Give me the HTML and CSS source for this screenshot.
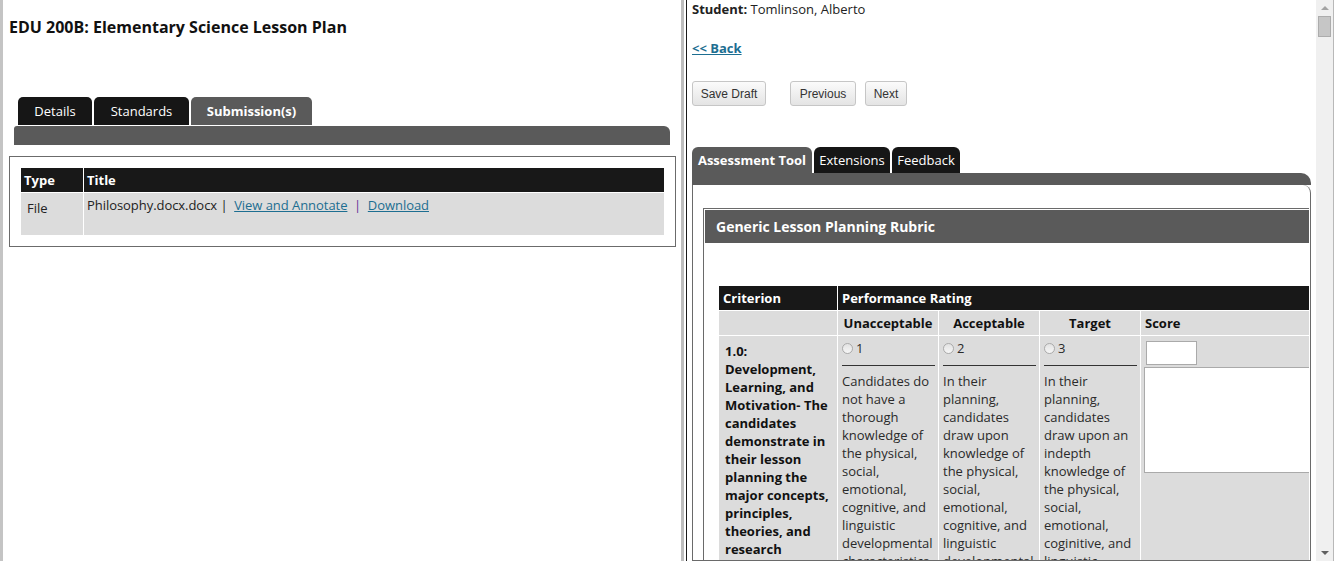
FILE: index.html
```html
<!DOCTYPE html>
<html lang="en">
<head>
    <meta charset="UTF-8">
    <meta name="viewport" content="width=device-width, initial-scale=1.0">
    <title>EDU 200B: Elementary Science Lesson Plan</title>
    <link rel="stylesheet" href="styles.css">
</head>
<body>
<div class="page">

    <!-- Assignment side -->
    <div class="left-pane">
        <h1 class="assignment-title">EDU 200B: Elementary Science Lesson Plan</h1>

        <ul class="tabs tabs-left">
            <li class="tab tab-details">Details</li>
            <li class="tab tab-standards">Standards</li>
            <li class="tab tab-submissions active">Submission(s)</li>
        </ul>
        <div class="left-bar"></div>

        <div class="submissions-box">
            <table class="submissions">
                <colgroup>
                    <col class="col-type">
                    <col>
                </colgroup>
                <tr>
                    <th>Type</th>
                    <th>Title</th>
                </tr>
                <tr>
                    <td class="type-cell">File</td>
                    <td class="title-cell">Philosophy.docx.docx | &nbsp;<a href="#">View and Annotate</a> &nbsp;<span class="sep">|</span> &nbsp;<a href="#">Download</a></td>
                </tr>
            </table>
        </div>
    </div>

    <div class="divider"></div>

    <!-- Grading side -->
    <div class="right-pane">
        <p class="student"><b>Student:</b> Tomlinson, Alberto</p>
        <a class="back-link" href="#">&lt;&lt; Back</a>

        <div class="actions">
            <button class="btn btn-draft">Save Draft</button>
            <button class="btn btn-prev">Previous</button>
            <button class="btn btn-next">Next</button>
        </div>

        <ul class="tabs tabs-right">
            <li class="tab tab-assessment active">Assessment Tool</li>
            <li class="tab tab-extensions">Extensions</li>
            <li class="tab tab-feedback">Feedback</li>
        </ul>
        <div class="right-bar"></div>

        <div class="tab-panel">
            <div class="rubric">
                <div class="rubric-title">Generic Lesson Planning Rubric</div>

                <table class="rubric-table">
                    <colgroup>
                        <col class="col-criterion">
                        <col class="col-level">
                        <col class="col-level">
                        <col class="col-level">
                        <col class="col-score">
                    </colgroup>
                    <tr class="head-row">
                        <th>Criterion</th>
                        <th colspan="4">Performance Rating</th>
                    </tr>
                    <tr class="level-row">
                        <th></th>
                        <th class="center">Unacceptable</th>
                        <th class="center">Acceptable</th>
                        <th class="center">Target</th>
                        <th>Score</th>
                    </tr>
                    <tr class="criterion-row">
                        <td class="criterion">1.0: Development, Learning, and Motivation- The candidates demonstrate in their lesson planning the major concepts, principles, theories, and research related to development of children and young adolescents</td>
                        <td class="rating">
                            <div class="rating-choice"><span class="radio"></span>1</div>
                            <div class="rating-rule"></div>
                            Candidates do not have a thorough knowledge of the physical, social, emotional, cognitive, and linguistic developmental characteristics of students
                        </td>
                        <td class="rating">
                            <div class="rating-choice"><span class="radio"></span>2</div>
                            <div class="rating-rule"></div>
                            In their planning, candidates draw upon knowledge of the physical, social, emotional, cognitive, and linguistic developmental characteristics of students
                        </td>
                        <td class="rating">
                            <div class="rating-choice"><span class="radio"></span>3</div>
                            <div class="rating-rule"></div>
                            In their planning, candidates draw upon an indepth knowledge of the physical, social, emotional, coginitive, and linguistic developmental characteristics of students
                        </td>
                        <td class="score">
                            <input type="text" class="score-input">
                            <textarea class="score-comment"></textarea>
                        </td>
                    </tr>
                </table>
            </div>
        </div>
    </div>

    <!-- Frame scrollbar -->
    <div class="scrollbar">
        <div class="scroll-arrow"><span class="arrow-up"></span></div>
        <div class="scroll-track"><div class="scroll-thumb"></div></div>
        <div class="scroll-arrow"><span class="arrow-down"></span></div>
    </div>

</div>
</body>
</html>
```

FILE: styles.css
```css
* {
    box-sizing: border-box;
}

html, body {
    margin: 0;
    height: 100%;
}

body {
    font-family: "Open Sans", sans-serif;
    font-size: 13px;
    line-height: 18px;
    color: #222;
    background: #fff;
    overflow: hidden;
}

.page {
    display: flex;
    height: 561px;
}

a {
    color: #1d6e91;
}

/* ---------- left pane ---------- */

.left-pane {
    width: 681px;
    flex: none;
    border-left: 3px solid #c4c4c4;
    padding-left: 6px;
}

.assignment-title {
    margin: 16px 0 0;
    font-size: 16px;
    line-height: 22px;
    font-weight: 700;
    color: #111;
}

.tabs {
    display: flex;
    list-style: none;
    margin: 0;
    padding: 0;
}

.tab {
    background: #161616;
    color: #fff;
    margin-right: 2px;
    text-align: center;
    white-space: nowrap;
    border-radius: 5px 5px 0 0;
}

.tab.active {
    background: #5a5a5a;
    font-weight: 700;
}

.tabs-left {
    margin: 59px 0 0 9px;
}

.tabs-left .tab {
    height: 28px;
    line-height: 28px;
}

.tab-details {
    width: 74px;
}

.tab-standards {
    width: 95px;
}

.tab-submissions {
    width: 121px;
}

.left-bar {
    height: 19px;
    margin: 1px 11px 0 5px;
    background: #5a5a5a;
    border-radius: 3px 6px 0 0;
}

.submissions-box {
    margin: 11px 5px 0 0;
    padding: 10px;
    border: 1px solid #6b6b6b;
}

.submissions {
    width: 100%;
    border-collapse: separate;
    border-spacing: 1px;
    table-layout: fixed;
}

.col-type {
    width: 62px;
}

.submissions th {
    height: 24px;
    padding: 3px;
    text-align: left;
    background: #181818;
    color: #fff;
    font-weight: 700;
}

.submissions td {
    height: 42px;
    vertical-align: top;
    background: #dcdcdc;
}

.type-cell {
    padding: 6px;
}

.title-cell {
    padding: 3px;
    letter-spacing: -0.05px;
}

.sep {
    color: #639;
}

/* ---------- divider ---------- */

.divider {
    width: 5px;
    flex: none;
    border-left: 3px solid #bdbdbd;
}

/* ---------- right pane ---------- */

.right-pane {
    width: 630px;
    flex: none;
    display: flex;
    flex-direction: column;
    border-left: 1px solid #1a1a1a;
    padding: 0 5px;
}

.student {
    margin: 0;
}

.back-link {
    align-self: flex-start;
    margin-top: 21px;
    font-weight: 700;
}

.actions {
    display: flex;
    margin-top: 24px;
}

.btn {
    height: 25px;
    padding: 0;
    font-family: "Liberation Sans", Arial, sans-serif;
    font-size: 12px;
    color: #333;
    background: linear-gradient(#fbfbfb, #e4e4e4);
    border: 1px solid #c6c6c6;
    border-radius: 3px;
}

.btn-draft {
    width: 74px;
    margin-right: 24px;
}

.btn-prev {
    width: 66px;
    margin-right: 9px;
}

.btn-next {
    width: 42px;
}

.tabs-right {
    margin-top: 41px;
}

.tabs-right .tab {
    height: 26px;
    line-height: 26px;
    border-radius: 6px 6px 0 0;
}

.tab-assessment {
    width: 120px;
}

.tab-extensions {
    width: 76px;
}

.tab-feedback {
    width: 68px;
}

.right-bar {
    height: 12px;
    background: #5a5a5a;
    border-radius: 0 10px 0 0;
}

.tab-panel {
    flex: 1;
    overflow: hidden;
    padding: 23px 0 0 10px;
    border: 1px solid #6a6a6a;
    border-top: none;
    border-top-right-radius: 8px;
}

.rubric {
    width: 606px;
    height: 100%;
    overflow: hidden;
    padding: 1px 0 0 1px;
    border: 1px solid #6a6a6a;
    border-bottom: none;
    border-right: none;
}

.rubric-title {
    width: 720px;
    height: 33px;
    line-height: 33px;
    padding-left: 11px;
    background: #5a5a5a;
    color: #fff;
    font-size: 14px;
    font-weight: 700;
}

.rubric-table {
    margin: 42px 0 0 13px;
    border-collapse: separate;
    border-spacing: 1px;
    table-layout: fixed;
    width: 624px;
}

.col-criterion {
    width: 118px;
}

.col-level {
    width: 100px;
}

.col-score {
    width: 200px;
}

.rubric-table th {
    height: 24px;
    padding: 3px 4px;
    text-align: left;
    font-weight: 700;
}

.rubric-table th.center {
    text-align: center;
}

.head-row th {
    background: #181818;
    color: #fff;
}

.level-row th {
    background: #dcdcdc;
    color: #111;
}

.criterion-row td {
    vertical-align: top;
    background: #dcdcdc;
}

.criterion {
    padding: 6px 6px 5px;
    font-weight: 700;
    color: #111;
}

.rating {
    padding: 3px 3px 0 4px;
    color: #2a2a2a;
}

.rating-choice {
    height: 18px;
}

.radio {
    display: inline-block;
    width: 11px;
    height: 11px;
    margin-right: 3px;
    vertical-align: -1px;
    border: 1px solid #aaa;
    border-radius: 50%;
    background: linear-gradient(#e2e2e2, #f6f6f6);
}

.rating-rule {
    margin: 8px 0 6px;
    border-top: 1px solid #333;
}

.score {
    padding: 5px 3px;
}

.score-input {
    display: block;
    width: 51px;
    height: 24px;
    margin-left: 2px;
    border: 1px solid #aaa;
    background: #fff;
}

.score-comment {
    display: block;
    width: 190px;
    height: 106px;
    margin-top: 2px;
    border: 1px solid #aaa;
    resize: none;
}

/* ---------- scrollbar ---------- */

.scrollbar {
    width: 18px;
    flex: none;
    display: flex;
    flex-direction: column;
    background: #f0f0f0;
    border-right: 1px solid #b8b8b8;
}

.scroll-arrow {
    height: 16px;
    display: flex;
    align-items: center;
    justify-content: center;
}

.arrow-up {
    border-left: 4px solid transparent;
    border-right: 4px solid transparent;
    border-bottom: 4px solid #a3a3a3;
}

.arrow-down {
    border-left: 4px solid transparent;
    border-right: 4px solid transparent;
    border-top: 4px solid #606060;
}

.scroll-track {
    flex: 1;
    padding: 0 2px;
}

.scroll-thumb {
    height: 21px;
    background: #c6c6c6;
    border: 1px solid #acacac;
}
```
